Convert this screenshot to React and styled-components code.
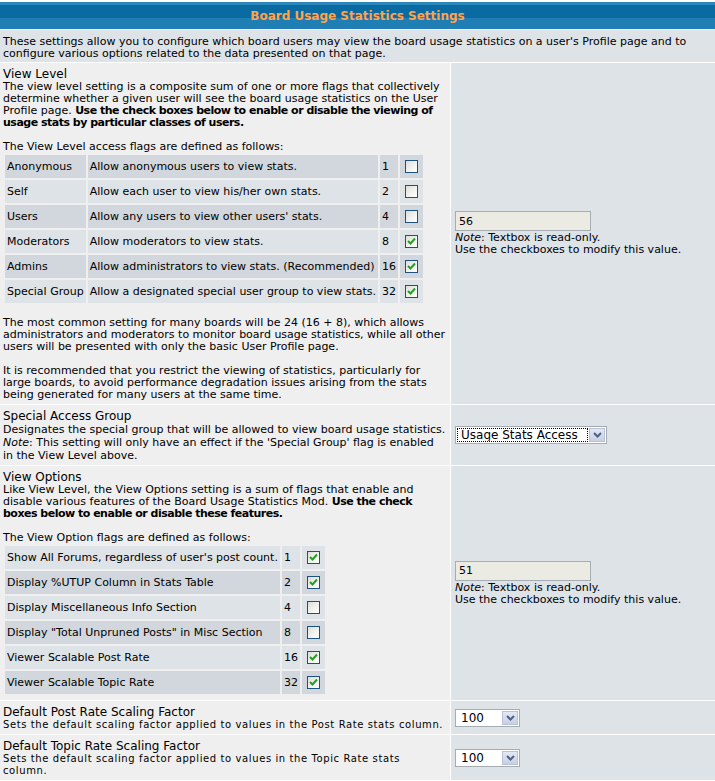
import React from "react";
import styled, { createGlobalStyle } from "styled-components";

const GlobalStyle = createGlobalStyle`
  body {
    margin: 0;
    background: #ffffff;
    font-family: "DejaVu Sans", Verdana, sans-serif;
    color: #000000;
  }
`;

const Forumline = styled.div`
  display: grid;
  grid-template-columns: 450px 1fr;
  gap: 1px;
  background: #ffffff;
  padding-top: 2px;
  width: 715px;
`;

const HeaderCell = styled.div`
  grid-column: 1 / -1;
  height: 27px;
  display: flex;
  align-items: center;
  justify-content: center;
  padding-top: 1px;
  box-sizing: border-box;
  background: linear-gradient(
    to bottom,
    #2b87bb 0px,
    #2b87bb 3px,
    #0a6ba2 3px,
    #0a6ba2 16px,
    #1f7fb5 16px,
    #1f7fb5 27px
  );
  color: #ffa34f;
  font-weight: bold;
  font-size: 12px;
`;

const IntroCell = styled.div`
  grid-column: 1 / -1;
  background: #dee3e7;
  padding: 6px 3px 2px;
  font-size: 11px;
  line-height: 12px;
`;

const LabelCell = styled.div`
  background: #efefef;
  padding: 4px 3px 3px;
`;

const ValueCell = styled.div`
  background: #dee3e7;
  display: flex;
  flex-direction: column;
  justify-content: center;
  align-items: flex-start;
  padding: 0 4px;
`;

const Title = styled.div`
  font-size: 12px;
  line-height: 14px;
`;

const Explain = styled.div`
  font-size: ${(p) => (p.$small ? "10px" : "11px")};
  letter-spacing: ${(p) => (p.$small ? "0.6px" : "0")};
  line-height: ${(p) => p.$lh || 12}px;

  & > p {
    margin: 0;
  }

  & > p + p {
    margin-top: 12px;
  }

  & b {
    letter-spacing: -0.5px;
  }
`;

const FlagTable = styled.table`
  border-spacing: 2px;
  margin: 0 0 ${(p) => p.$after}px;
  font-size: 11px;

  & td {
    height: 23px;
    padding: 0 2px;
    white-space: nowrap;
  }
`;

const FlagRow = styled.tr`
  & > td {
    background: ${(p) => (p.$dark ? "#d1d7dc" : "#dee3e7")};
  }
`;

const BoxCell = styled.td`
  && {
    padding: 0 5px;
  }
`;

const Box = styled.span`
  display: flex;
  width: 13px;
  height: 13px;
  box-sizing: border-box;
  border: 1px solid #1c5180;
  background: linear-gradient(135deg, #dcdcd7 0%, #f4f4f2 60%, #ffffff 100%);
  align-items: center;
  justify-content: center;
  margin: 0 auto;
`;

const ReadOnlyBox = styled.input`
  box-sizing: border-box;
  width: 136px;
  height: 20px;
  border: 1px solid #a5acb2;
  background: #ebebe4;
  font-family: inherit;
  font-size: 11px;
  padding: 0 3px;
  margin: 0 0 1px;
  color: #000;
  outline: none;
`;

const Note = styled.div`
  font-size: 11px;
  line-height: 12px;
`;

const Dropdown = styled.div`
  box-sizing: border-box;
  display: flex;
  align-items: center;
  width: ${(p) => p.$width}px;
  height: 18px;
  border: 1px solid #a5acb2;
  background: #ffffff;
  padding: 1px;
`;

const DropField = styled.div`
  flex: 1;
  height: 14px;
  box-sizing: border-box;
  font-size: 12px;
  line-height: 12px;
  padding: 0 3px;
  border: 1px dotted ${(p) => (p.$focus ? "#000" : "transparent")};
  white-space: nowrap;
  overflow: hidden;
`;

const DropButton = styled.div`
  box-sizing: border-box;
  width: 16px;
  height: 14px;
  margin-left: 1px;
  border: 1px solid #b8c1d8;
  background: linear-gradient(to bottom, #e4e8f4, #c9d0e2);
  display: flex;
  align-items: center;
  justify-content: center;
`;

const Checkbox = ({ checked }) => (
  <Box>
    {checked && (
      <svg width="9" height="9" viewBox="0 0 9 9">
        <polyline
          points="1,4 3.5,6.5 8,1.5"
          fill="none"
          stroke="#21a121"
          strokeWidth="2"
        />
      </svg>
    )}
  </Box>
);

const Select = ({ value, width, focus }) => (
  <Dropdown $width={width}>
    <DropField $focus={focus}>{value}</DropField>
    <DropButton>
      <svg width="9" height="6" viewBox="0 0 9 6">
        <polyline
          points="1,1 4.5,4.5 8,1"
          fill="none"
          stroke="#4d6185"
          strokeWidth="2"
        />
      </svg>
    </DropButton>
  </Dropdown>
);

const levelFlags = [
  ["Anonymous", "Allow anonymous users to view stats.", 1, false],
  ["Self", "Allow each user to view his/her own stats.", 2, false],
  ["Users", "Allow any users to view other users' stats.", 4, false],
  ["Moderators", "Allow moderators to view stats.", 8, true],
  ["Admins", "Allow administrators to view stats. (Recommended)", 16, true],
  ["Special Group", "Allow a designated special user group to view stats.", 32, true],
];

const optionFlags = [
  ["Show All Forums, regardless of user's post count.", 1, true],
  ["Display %UTUP Column in Stats Table", 2, true],
  ["Display Miscellaneous Info Section", 4, false],
  ['Display "Total Unpruned Posts" in Misc Section', 8, false],
  ["Viewer Scalable Post Rate", 16, true],
  ["Viewer Scalable Topic Rate", 32, true],
];

const ReadOnlyValue = ({ value }) => (
  <>
    <ReadOnlyBox readOnly value={value} />
    <Note>
      <i>Note</i>: Textbox is read-only.
      <br />
      Use the checkboxes to modify this value.
    </Note>
  </>
);

const App = () => {
  return (
    <>
      <GlobalStyle />
      <Forumline>
        <HeaderCell>Board Usage Statistics Settings</HeaderCell>
        <IntroCell>
          These settings allow you to configure which board users may view the
          board usage statistics on a user's Profile page and to configure
          various options related to the data presented on that page.
        </IntroCell>

        <LabelCell>
          <Title>View Level</Title>
          <Explain>
            <p>
              The view level setting is a composite sum of one or more flags
              that collectively determine whether a given user will see the
              board usage statistics on the User Profile page.{" "}
              <b>
                Use the check boxes below to enable or disable the viewing of
                usage stats by particular classes of users.
              </b>
            </p>
            <p>The View Level access flags are defined as follows:</p>
          </Explain>
          <FlagTable $after={12}>
            <tbody>
              {levelFlags.map(([name, desc, num, on], i) => (
                <FlagRow key={name} $dark={i % 2 === 0}>
                  <td>{name}</td>
                  <td>{desc}</td>
                  <td>{num}</td>
                  <BoxCell>
                    <Checkbox checked={on} />
                  </BoxCell>
                </FlagRow>
              ))}
            </tbody>
          </FlagTable>
          <Explain>
            <p>
              The most common setting for many boards will be 24 (16 + 8), which
              allows administrators and moderators to monitor board usage
              statistics, while all other users will be presented with only the
              basic User Profile page.
            </p>
            <p>
              It is recommended that you restrict the viewing of statistics,
              particularly for large boards, to avoid performance degradation
              issues arising from the stats being generated for many users at
              the same time.
            </p>
          </Explain>
        </LabelCell>
        <ValueCell>
          <ReadOnlyValue value="56" />
        </ValueCell>

        <LabelCell>
          <Title>Special Access Group</Title>
          <Explain $lh={13}>
            Designates the special group that will be allowed to view board
            usage statistics.
            <br />
            <i>Note</i>: This setting will only have an effect if the 'Special
            Group' flag is enabled in the View Level above.
          </Explain>
        </LabelCell>
        <ValueCell>
          <Select value="Usage Stats Access" width={152} focus />
        </ValueCell>

        <LabelCell>
          <Title>View Options</Title>
          <Explain>
            <p>
              Like View Level, the View Options setting is a sum of flags that
              enable and disable various features of the Board Usage Statistics
              Mod.{" "}
              <b>
                Use the check boxes below to enable or disable these features.
              </b>
            </p>
            <p>The View Option flags are defined as follows:</p>
          </Explain>
          <FlagTable $after={1}>
            <tbody>
              {optionFlags.map(([desc, num, on], i) => (
                <FlagRow key={desc} $dark={i % 2 === 1}>
                  <td>{desc}</td>
                  <td>{num}</td>
                  <BoxCell>
                    <Checkbox checked={on} />
                  </BoxCell>
                </FlagRow>
              ))}
            </tbody>
          </FlagTable>
        </LabelCell>
        <ValueCell>
          <ReadOnlyValue value="51" />
        </ValueCell>

        <LabelCell>
          <Title>Default Post Rate Scaling Factor</Title>
          <Explain $small>
            Sets the default scaling factor applied to values in the Post Rate
            stats column.
          </Explain>
        </LabelCell>
        <ValueCell>
          <Select value="100" width={65} />
        </ValueCell>

        <LabelCell>
          <Title>Default Topic Rate Scaling Factor</Title>
          <Explain $small>
            Sets the default scaling factor applied to values in the Topic Rate
            stats column.
          </Explain>
        </LabelCell>
        <ValueCell>
          <Select value="100" width={65} />
        </ValueCell>
      </Forumline>
    </>
  );
};

export default App;
